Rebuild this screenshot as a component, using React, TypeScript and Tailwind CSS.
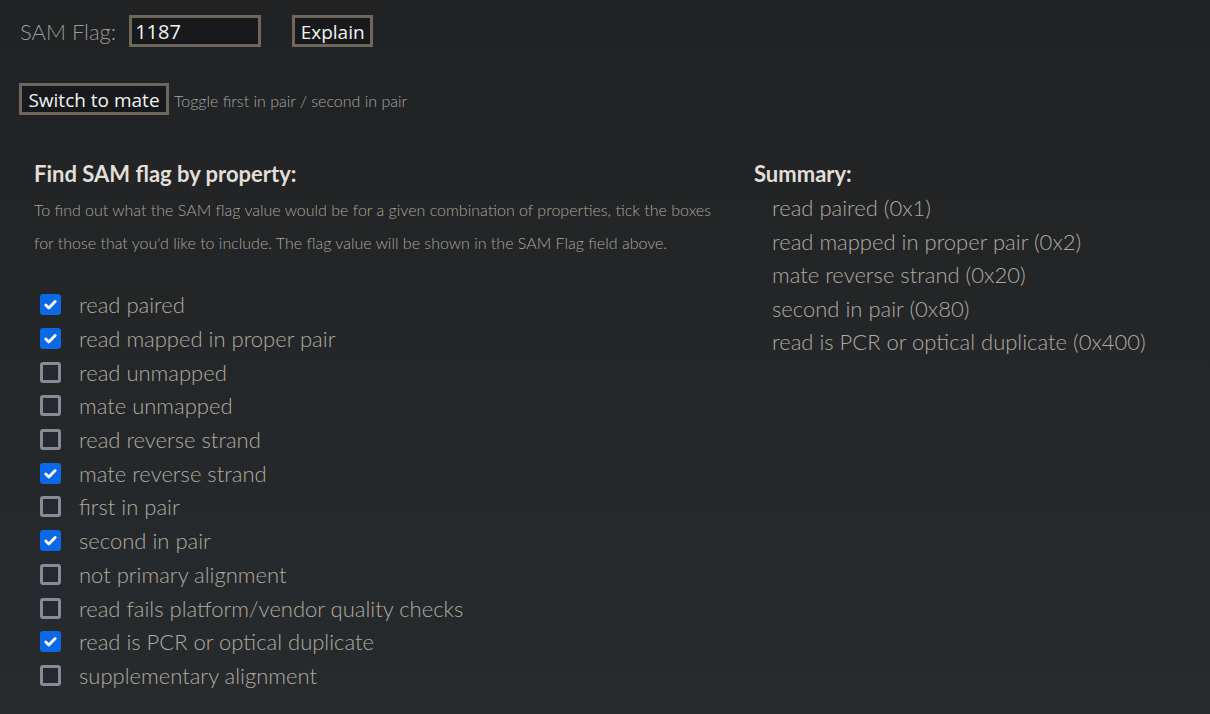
import React, { useState } from "react";

const FLAGS = [
  { label: "read paired", bit: 0x1 },
  { label: "read mapped in proper pair", bit: 0x2 },
  { label: "read unmapped", bit: 0x4 },
  { label: "mate unmapped", bit: 0x8 },
  { label: "read reverse strand", bit: 0x10 },
  { label: "mate reverse strand", bit: 0x20 },
  { label: "first in pair", bit: 0x40 },
  { label: "second in pair", bit: 0x80 },
  { label: "not primary alignment", bit: 0x100 },
  { label: "read fails platform/vendor quality checks", bit: 0x200 },
  { label: "read is PCR or optical duplicate", bit: 0x400 },
  { label: "supplementary alignment", bit: 0x800 },
];

const Box = ({ checked }: { checked: boolean }) =>
  checked ? (
    <span className="flex h-[21px] w-[21px] items-center justify-center rounded-[3px] bg-[#0b68e6]">
      <svg viewBox="0 0 16 16" className="h-[15px] w-[15px]" fill="none">
        <path d="M3 8.5l3.2 3.2L13 4.8" stroke="white" strokeWidth="3" strokeLinecap="round" strokeLinejoin="round" />
      </svg>
    </span>
  ) : (
    <span className="block h-[21px] w-[21px] rounded-[3px] border-[3px] border-[#8a8996] bg-[#27272f]" />
  );

export default function App() {
  const [flag, setFlag] = useState(1187);

  const toggle = (bit: number) => setFlag((f) => f ^ bit);
  const switchMate = () => setFlag((f) => (f & 0xc0 ? f ^ 0xc0 : f));

  return (
    <div className="min-h-[714px] w-full bg-gradient-to-b from-[#202223] to-[#282b2e] pt-[15px] font-['Lato',sans-serif] text-[#a8a297]">
      <div className="flex h-[32px] items-center pl-[20px]">
        <span className="mr-[13px] text-[22px] font-light text-[#9c9c9c]">SAM Flag:</span>
        <input
          value={flag}
          onChange={(e) => setFlag(parseInt(e.target.value || "0", 10) || 0)}
          className="h-[32px] w-[132px] border-[3px] border-[#6d665d] bg-[#17191a] px-[3px] font-['Open_Sans',sans-serif] text-[20px] text-[#f2f2f2] outline-none"
        />
        <button className="ml-[31px] h-[32px] w-[81px] border-[3px] border-[#6d665d] bg-[#17191a] font-['Open_Sans',sans-serif] text-[19px] text-[#f2f2f2]">
          Explain
        </button>
      </div>

      <div className="mt-[36px] flex h-[32px] items-center pl-[19px]">
        <button
          onClick={switchMate}
          className="h-[32px] w-[150px] border-[3px] border-[#6d665d] bg-[#17191a] font-['Open_Sans',sans-serif] text-[19px] text-[#f2f2f2]"
        >
          Switch to mate
        </button>
        <span className="ml-[5px] pt-[4px] text-[16px] font-light text-[#a6a6a6]">
          Toggle first in pair / second in pair
        </span>
      </div>

      <div className="mt-[44px] flex">
        <div className="w-[754px] pl-[34px]">
          <h2 className="text-[22px] font-bold leading-[30px] text-[#e2ded8]">Find SAM flag by property:</h2>
          <p className="mt-[4px] text-[16px] font-light leading-[33px] text-[#aca69d]">
            To find out what the SAM flag value would be for a given combination of properties, tick the boxes
            <br />
            for those that you'd like to include. The flag value will be shown in the SAM Flag field above.
          </p>
          <ul className="mt-[29px]">
            {FLAGS.map((f) => (
              <li
                key={f.bit}
                onClick={() => toggle(f.bit)}
                className="flex h-[33.7px] cursor-pointer items-center pl-[6px]"
              >
                <Box checked={(flag & f.bit) !== 0} />
                <span className="ml-[18px] text-[22px] font-light text-[#b0aa9f]">{f.label}</span>
              </li>
            ))}
          </ul>
        </div>

        <div>
          <h2 className="text-[22px] font-bold leading-[30px] text-[#e2ded8]">Summary:</h2>
          <ul className="mt-[2px] pl-[18px]">
            {FLAGS.filter((f) => flag & f.bit).map((f) => (
              <li key={f.bit} className="text-[22px] font-light leading-[33.5px] text-[#b0aa9f]">
                {f.label} (0x{f.bit.toString(16)})
              </li>
            ))}
          </ul>
        </div>
      </div>
    </div>
  );
}
